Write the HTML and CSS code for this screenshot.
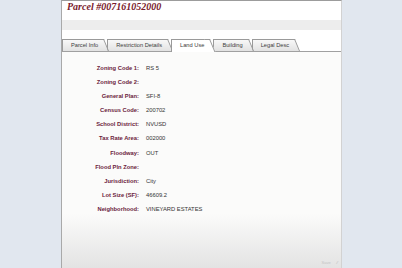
FILE: index.html
```html
<!DOCTYPE html>
<html lang="en">
<head>
  <meta charset="UTF-8" />
  <title>Parcel #007161052000</title>
  <link rel="stylesheet" href="styles.css">
</head>
<body>
  <div class="panel">
    <div class="title">Parcel #007161052000</div>
    <div class="band"></div>
    <div class="tabs">
      <span class="tab t1">Parcel Info</span>
      <span class="tab t2">Restriction Details</span>
      <span class="tab t3 active">Land Use</span>
      <span class="tab t4">Building</span>
      <span class="tab t5">Legal Desc</span>
    </div>
    <div class="content">
      <dl class="fields">
        <dt>Zoning Code 1:</dt><dd>RS 5</dd>
        <dt>Zoning Code 2:</dt><dd></dd>
        <dt>General Plan:</dt><dd>SFI-8</dd>
        <dt>Census Code:</dt><dd>200702</dd>
        <dt>School District:</dt><dd>NVUSD</dd>
        <dt>Tax Rate Area:</dt><dd>002000</dd>
        <dt>Floodway:</dt><dd>OUT</dd>
        <dt>Flood Pln Zone:</dt><dd></dd>
        <dt>Jurisdiction:</dt><dd>City</dd>
        <dt>Lot Size (SF):</dt><dd>46609.2</dd>
        <dt>Neighborhood:</dt><dd>VINEYARD ESTATES</dd>
      </dl>
      <!-- tiny status/resize marks in the corner -->
      <div class="grip"><span class="grip-text">Save</span><span class="grip-mark">&#8260;&#8260;</span></div>
    </div>
  </div>
</body>
</html>
```

FILE: styles.css
```css
body {
  margin: 0;
  background: #e1e7ef;
  font-family: "Liberation Sans", Arial, sans-serif;
}
.panel {
  margin-left: 61px;
  width: 281px;
  height: 100vh;
  box-sizing: border-box;
  border-top: 1px solid #9c9c9c;
  border-left: 1px solid #a9a9a9;
  border-right: 1px solid #d2d2d2;
  background: #fff;
  display: flex;
  flex-direction: column;
}
.title {
  height: 19px;
  line-height: 12px;
  padding-left: 5px;
  font-family: "Liberation Serif", Georgia, serif;
  font-weight: bold;
  font-style: italic;
  font-size: 10px;
  color: #7a1b2d;
}
.band {
  height: 10px;
  background: #ededed;
}
.tabs {
  display: flex;
  align-items: flex-start;
  padding-top: 9px;
  border-bottom: 1px solid #a0a0a0;
}
.tab {
  position: relative;
  height: 12px;
  line-height: 13px;
  padding: 0 11px 0 9px;
  margin-right: -2px;
  font-size: 5.7px;
  color: #3c3c3c;
  white-space: nowrap;
}
.tab::before,
.tab::after {
  content: "";
  position: absolute;
  top: 0;
  bottom: 0;
  z-index: -1;
  box-sizing: border-box;
  border-top: 1px solid #9a9a9a;
  background: linear-gradient(#f8f8f8, #e2e2e2);
}
.tab::before {
  left: 0;
  right: 5px;
  border-left: 1px solid #9a9a9a;
}
.tab::after {
  right: 5px;
  width: 6px;
  border-right: 1px solid #9a9a9a;
  transform: skewX(22.6deg);
  transform-origin: top left;
}
.t1 { z-index: 5; }
.t2 { z-index: 4; }
.t3 { z-index: 3; }
.t4 { z-index: 2; }
.t5 { z-index: 1; }
.tab.active {
  z-index: 10;
  height: 13px;
  margin-bottom: -1px;
}
.tab.active::before,
.tab.active::after {
  background: #fff;
}
.content {
  flex: 1;
  position: relative;
  background: linear-gradient(#fbfbfa 0, #fbfbfa 75%, #e3e3e3 100%);
}
.fields {
  display: grid;
  grid-template-columns: 77px auto;
  column-gap: 7px;
  grid-auto-rows: 14.1px;
  line-height: 14px;
  margin: 0;
  padding-top: 9px;
  font-size: 5.8px;
}
.fields dt {
  text-align: right;
  font-weight: bold;
  color: #6b1c3c;
}
.fields dd {
  margin: 0;
  color: #333;
}
.grip {
  position: absolute;
  right: 3px;
  bottom: 3px;
  display: flex;
  gap: 6px;
  font-size: 4px;
  color: #c4c4c4;
}
```
